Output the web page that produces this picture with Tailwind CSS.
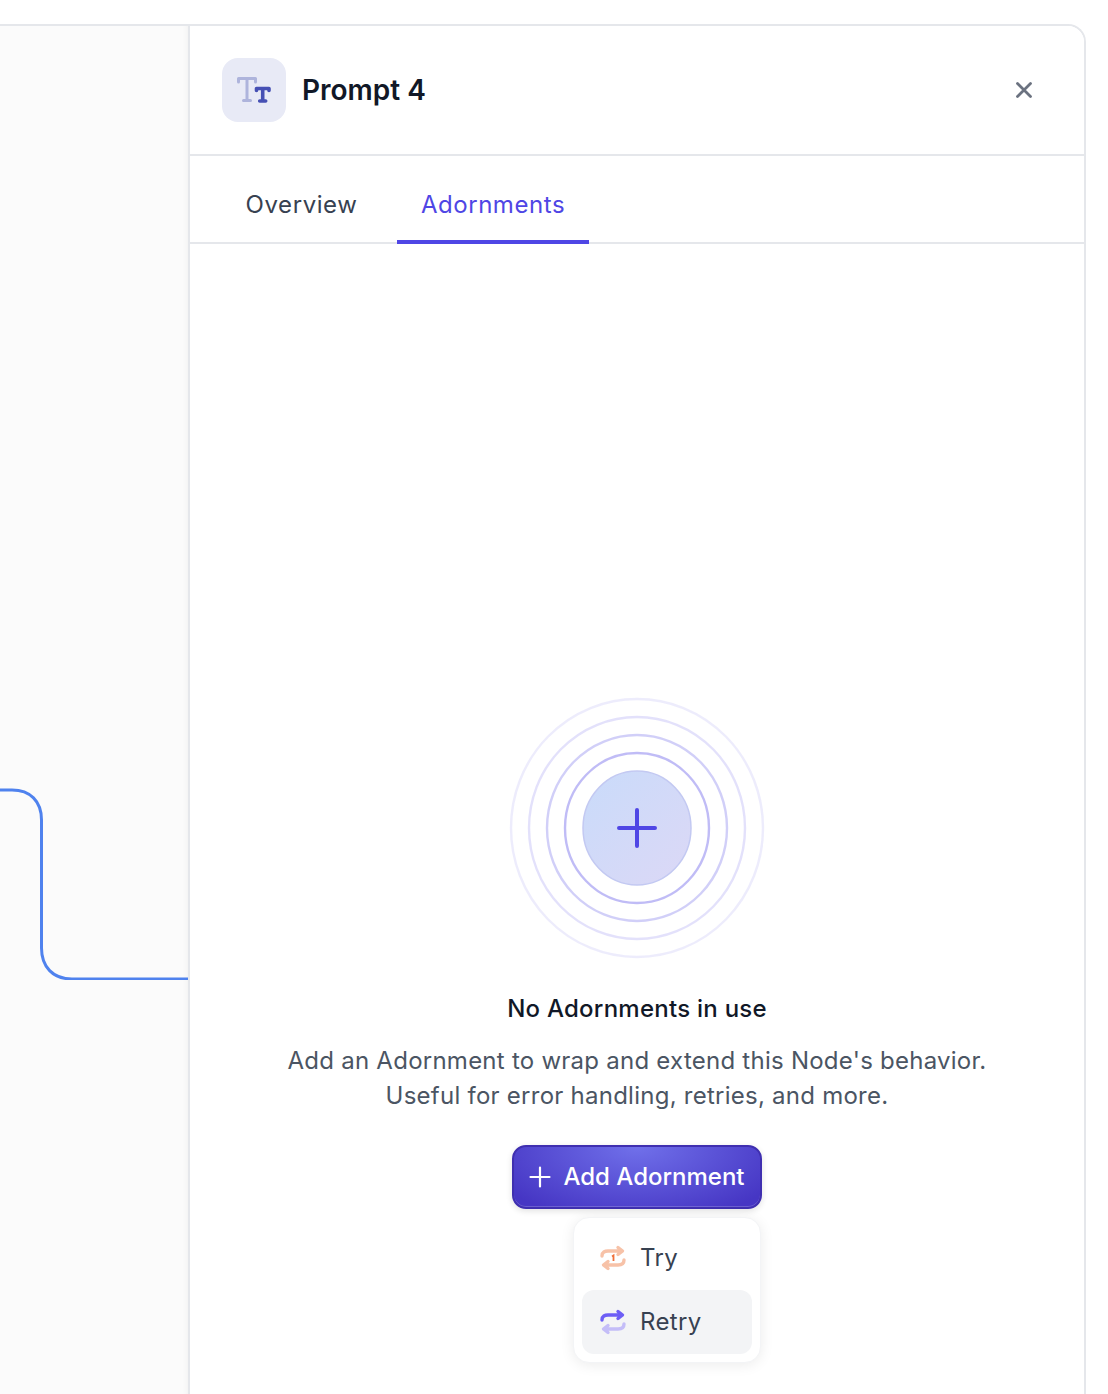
<!DOCTYPE html>
<html lang="en">
  <head>
    <meta charset="UTF-8" />
    <title>Prompt 4</title>
    <script src="https://cdn.jsdelivr.net/npm/@tailwindcss/browser@4"></script>
  </head>

  <body class="bg-white h-[1394px] overflow-hidden font-['Inter',sans-serif] pt-6 pr-[22px]">
    <div class="flex h-[1370px] border-t-2 border-r-2 border-[#e5e7eb] rounded-tr-[18px] overflow-hidden">
      <!-- Canvas -->
      <div class="w-[188px] shrink-0 bg-[#fbfbfb] shadow-[inset_-6px_0_6px_-6px_rgba(0,0,0,0.06)]">
        <svg class="mt-[762px]" width="188" height="192" viewBox="0 0 188 192" fill="none">
          <path d="M0 2H12C30 2 41.500 13 41.500 32V160C41.500 179 53 191 72 191H188" stroke="#4f82ee" stroke-width="3" />
        </svg>
      </div>

      <!-- Panel -->
      <div class="flex-1 flex flex-col border-l-2 border-[#e5e7eb] bg-white">
        <header class="h-[130px] shrink-0 flex items-center pl-8 pr-[50px] border-b-2 border-[#e5e7eb]">
          <div class="w-16 h-16 rounded-2xl bg-[#e8eaf6] flex items-center justify-center">
            <svg width="36" height="30" viewBox="0 0 36 30" fill="none">
              <path d="M2.500 7V3.500H19.500V7M11 3.500V25.500M7.500 25.500H14.500" stroke="#aeb4dc" stroke-width="3" stroke-linecap="round" stroke-linejoin="round" />
              <path d="M20.500 15.500V13.500H33V15.500M26.700 13.500V26M23.700 26H29.700" stroke="#4650b4" stroke-width="3.600" stroke-linecap="round" stroke-linejoin="round" />
            </svg>
          </div>
          <h1 class="ml-4 mb-[1px] text-[28px] font-semibold text-[#111827] leading-none">Prompt 4</h1>
          <svg class="ml-auto" width="20" height="20" viewBox="0 0 20 20" fill="none">
            <path d="M3.500 3.500L16.500 16.500M16.500 3.500L3.500 16.500" stroke="#6b7280" stroke-width="2.800" stroke-linecap="round" />
          </svg>
        </header>

        <nav class="h-[88px] shrink-0 flex items-stretch pl-8 border-b-2 border-[#e5e7eb]">
          <div class="px-6 pt-[12px] w-[159px] flex items-center justify-center text-[24px] font-normal text-[#374151] tracking-[0.58px]">Overview</div>
          <div class="ml-4 px-6 pt-[14px] w-[192px] flex items-center justify-center text-[24px] font-normal text-[#4f46e5] border-b-[4px] border-[#4f46e5] -mb-[2px] tracking-[0.55px]">Adornments</div>
        </nav>

        <main class="flex-1 flex flex-col items-center pt-[453px]">
          <svg width="258" height="262" viewBox="-129 -131 258 262" fill="none">
            <ellipse rx="126" ry="129" stroke="#4f46e5" stroke-opacity="0.1" stroke-width="2.400" />
            <ellipse rx="108" ry="111" stroke="#4f46e5" stroke-opacity="0.16" stroke-width="2.400" />
            <ellipse rx="90" ry="93" stroke="#4f46e5" stroke-opacity="0.26" stroke-width="2.400" />
            <ellipse rx="72" ry="75" stroke="#4f46e5" stroke-opacity="0.36" stroke-width="2.400" />
            <defs>
              <linearGradient id="fill" x1="0" y1="0" x2="1" y2="1">
                <stop offset="0" stop-color="#c9dbfa" />
                <stop offset="1" stop-color="#dcd8f6" />
              </linearGradient>
            </defs>
            <ellipse rx="54" ry="57" fill="url(#fill)" stroke="#c3c9f2" stroke-width="1.500" />
            <path d="M-18 0H18M0 -18V18" stroke="#4f46e5" stroke-width="4" stroke-linecap="round" />
          </svg>
          <h2 class="mt-[35px] text-[24px] leading-[30px] font-medium text-[#111827] tracking-[0.25px]">No Adornments in use</h2>
          <p class="mt-[19px] text-[24px] leading-[35px] text-[#4b5563] text-center tracking-[0.25px]">Add an Adornment to wrap and extend this Node's behavior.<br />Useful for error handling, retries, and more.</p>
          <button class="mt-[32px] w-[250px] h-16 rounded-[14px] border-2 border-[#3f2fb0] bg-[radial-gradient(ellipse_at_50%_0%,#7070ea,#4636c4_90%)] shadow-[0_2px_6px_rgba(0,0,0,0.12),inset_0_-1px_0_rgba(255,255,255,0.2)] flex items-center justify-center gap-[12px] text-[24px] font-medium text-white">
            <svg width="22" height="22" viewBox="0 0 22 22" fill="none">
              <path d="M1.500 11H20.500M11 1.500V20.500" stroke="white" stroke-width="2.200" stroke-linecap="round" />
            </svg>
            Add Adornment
          </button>
          <div class="ml-[60px] mt-2 w-[188px] p-2 rounded-2xl bg-white shadow-[0_2px_14px_rgba(0,0,0,0.08)] border border-[#f3f4f6]">
            <div class="h-16 flex items-center gap-[14px] pl-[17px] rounded-xl text-[24px] text-[#374151] tracking-[0.35px]">
              <svg class="ml-[1px]" width="26" height="26" viewBox="0 0 26 26" fill="none">
                <path d="M2 11C2 7 5 6 8 6H20M18 2.500L22.500 6L18 9.500" stroke="#f7c2a8" stroke-width="3.400" stroke-linecap="round" stroke-linejoin="round" />
                <path d="M24 15C24 19 21 20 18 20H6M8 16.500L3.500 20L8 23.500" stroke="#f7c2a8" stroke-width="3.400" stroke-linecap="round" stroke-linejoin="round" />
                <path d="M12 11.500L13.500 10.500V16" stroke="#f0703a" stroke-width="1.800" />
              </svg>
              <span>Try</span>
            </div>
            <div class="h-16 flex items-center gap-[14px] pl-[17px] rounded-xl bg-[#f3f4f6] text-[24px] text-[#374151] tracking-[0.35px]">
              <svg class="ml-[1px]" width="26" height="26" viewBox="0 0 26 26" fill="none">
                <path d="M2 11C2 7 5 6 8 6H20M18 2.500L22.500 6L18 9.500" stroke="#6d5ef5" stroke-width="3.400" stroke-linecap="round" stroke-linejoin="round" />
                <path d="M24 15C24 19 21 20 18 20H6M8 16.500L3.500 20L8 23.500" stroke="#c4bdf8" stroke-width="3.400" stroke-linecap="round" stroke-linejoin="round" />
              </svg>
              Retry
            </div>
          </div>
        </main>
      </div>
    </div>
  </body>
</html>
